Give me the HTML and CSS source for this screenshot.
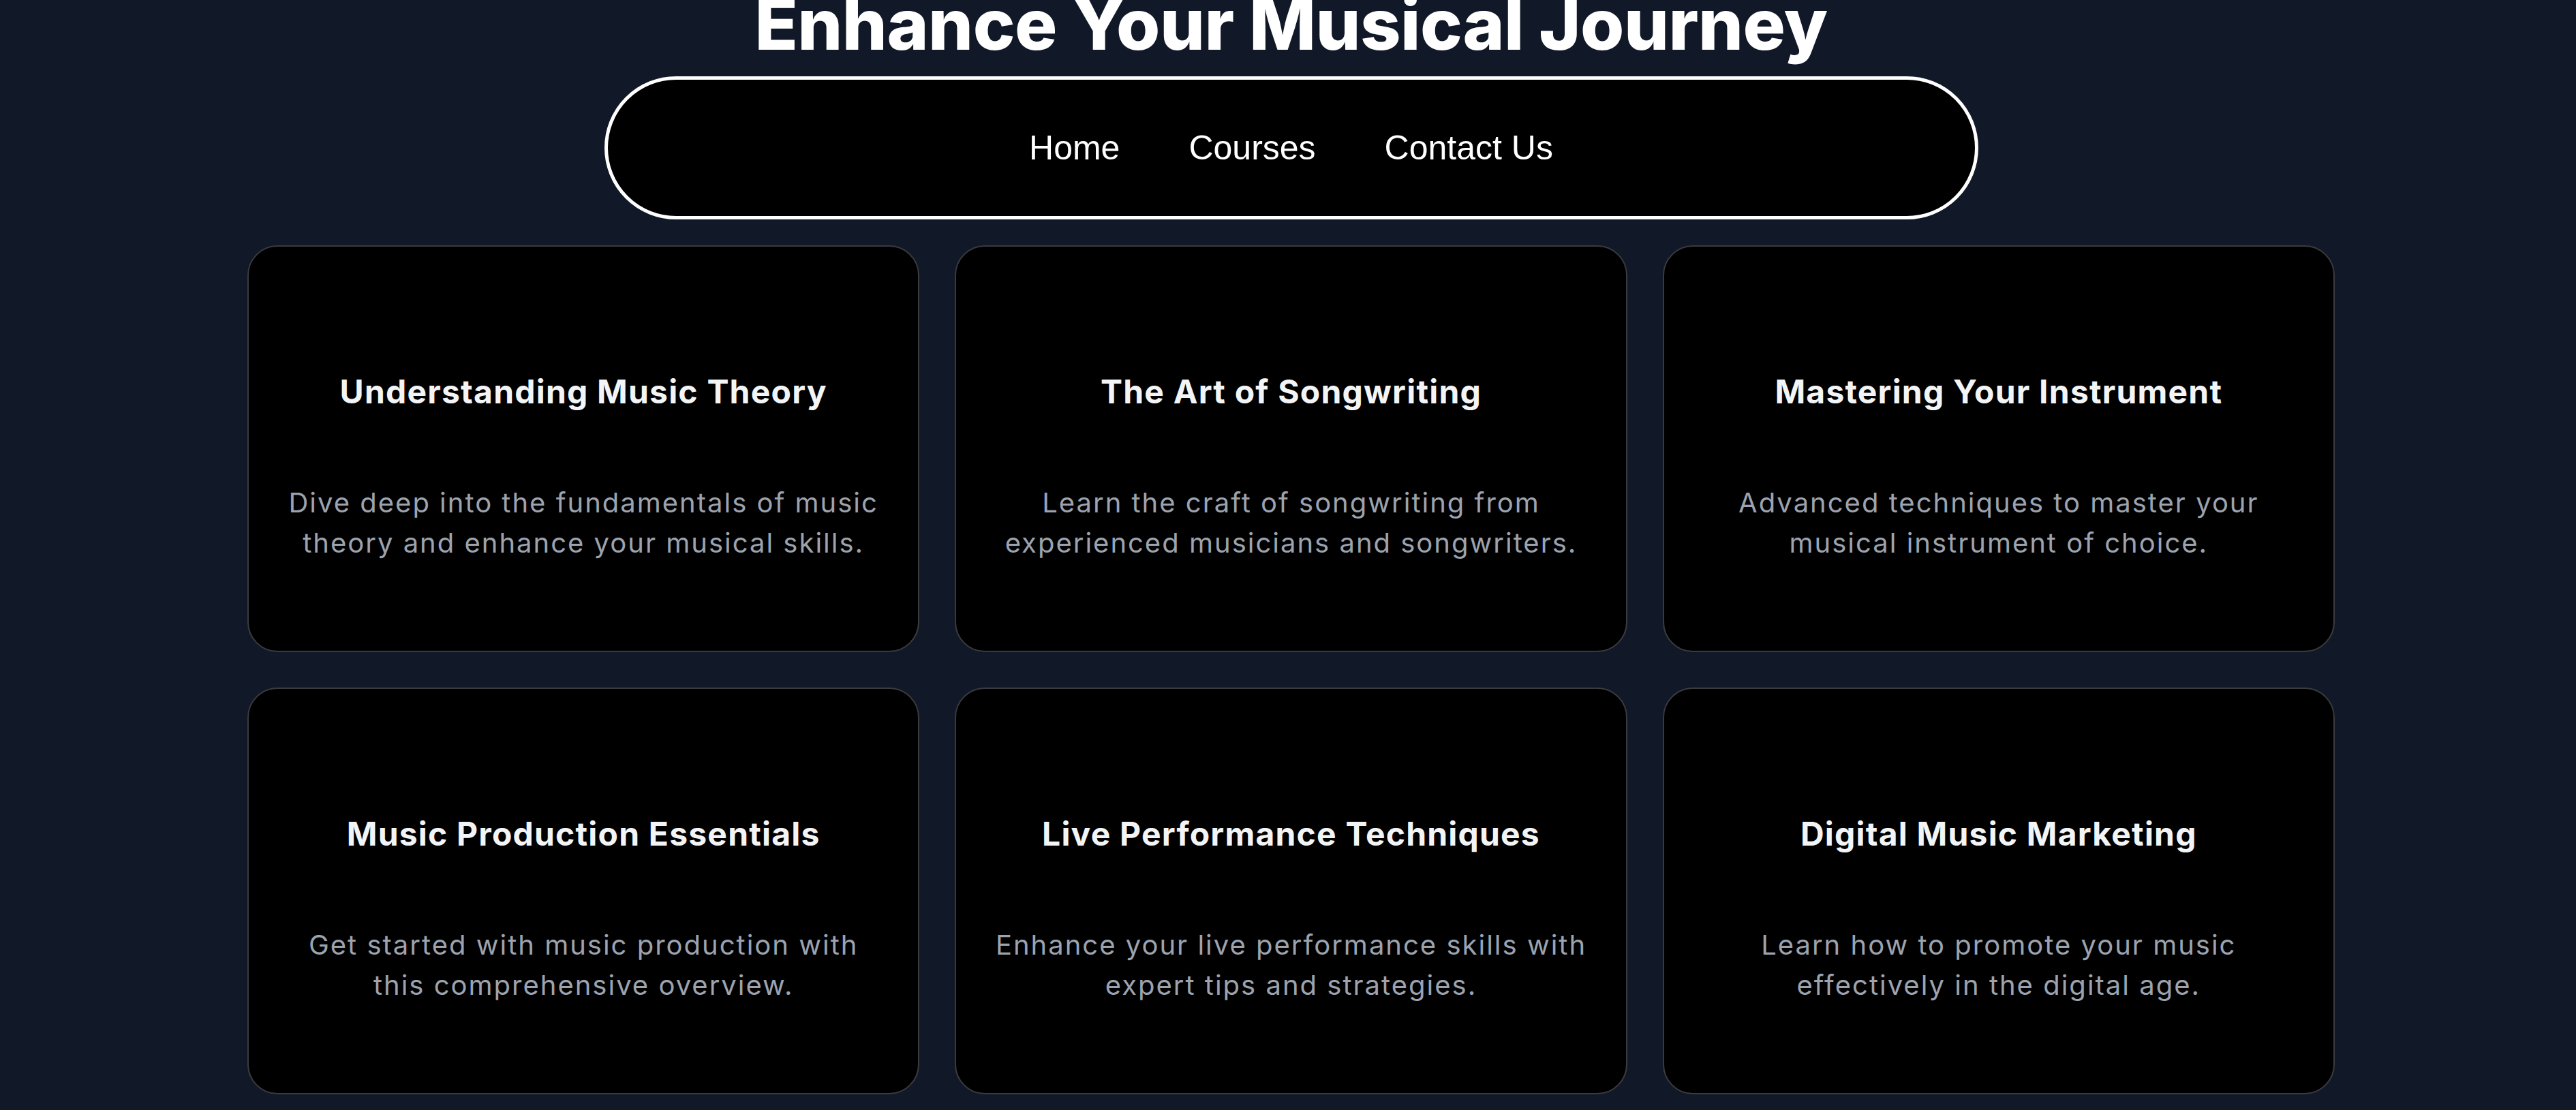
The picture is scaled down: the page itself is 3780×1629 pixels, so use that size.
FILE: index.html
```html
<!DOCTYPE html>
<html lang="en">
<head>
<meta charset="utf-8">
<title>Enhance Your Musical Journey</title>
<link rel="stylesheet" href="styles.css">
</head>
<body>
<main class="page">
  <h1 class="hero-title">Enhance Your Musical Journey</h1>
  <nav class="nav-pill">
    <a class="nav-link" href="#">Home</a>
    <a class="nav-link" href="#">Courses</a>
    <a class="nav-link" href="#">Contact Us</a>
  </nav>
  <section class="course-grid">
    <article class="course-card">
      <h2 class="course-title">Understanding Music Theory</h2>
      <p class="course-desc">Dive deep into the fundamentals of music theory and enhance your musical skills.</p>
    </article>
    <article class="course-card">
      <h2 class="course-title">The Art of Songwriting</h2>
      <p class="course-desc">Learn the craft of songwriting from experienced musicians and songwriters.</p>
    </article>
    <article class="course-card">
      <h2 class="course-title">Mastering Your Instrument</h2>
      <p class="course-desc">Advanced techniques to master your musical instrument of choice.</p>
    </article>
    <article class="course-card">
      <h2 class="course-title">Music Production Essentials</h2>
      <p class="course-desc">Get started with music production with this comprehensive overview.</p>
    </article>
    <article class="course-card">
      <h2 class="course-title">Live Performance Techniques</h2>
      <p class="course-desc">Enhance your live performance skills with expert tips and strategies.</p>
    </article>
    <article class="course-card">
      <h2 class="course-title">Digital Music Marketing</h2>
      <p class="course-desc">Learn how to promote your music effectively in the digital age.</p>
    </article>
  </section>
</main>
</body>
</html>
```
FILE: styles.css
```css
html, body {
  margin: 0;
  padding: 0;
  background: #111827;
  overflow: hidden;
}

.page {
  display: flex;
  flex-direction: column;
  align-items: center;
  padding-left: 9px;
  font-family: Inter, "Noto Sans", sans-serif;
}

.hero-title {
  margin: -17px 0 0;
  font-family: Inter, sans-serif;
  font-size: 104px;
  line-height: 104px;
  font-weight: 800;
  letter-spacing: -0.005em;
  color: #ffffff;
  white-space: nowrap;
}

.nav-pill {
  box-sizing: border-box;
  width: 2016px;
  height: 210px;
  margin-top: 25px;
  border: 5px solid #ffffff;
  border-radius: 9999px;
  background: #000000;
  display: flex;
  align-items: center;
  justify-content: center;
  gap: 101px;
}

.nav-link {
  font-family: "Liberation Sans", Arial, sans-serif;
  font-size: 50px;
  color: #ffffff;
  text-decoration: none;
}

.course-grid {
  width: 3063px;
  margin-top: 38px;
  display: grid;
  grid-template-columns: repeat(3, 1fr);
  column-gap: 52px;
  row-gap: 52px;
}

.course-card {
  box-sizing: border-box;
  background: #000000;
  border: 2px solid #3b3b3f;
  border-radius: 44px;
  padding: 177px 50px 129px;
  text-align: center;
}

.course-title {
  margin: 0;
  font-size: 48px;
  line-height: 72px;
  font-weight: 700;
  letter-spacing: 0.025em;
  color: #f3f4f6;
}

.course-desc {
  margin: 97px 0 0;
  font-size: 40px;
  line-height: 59px;
  font-weight: 400;
  letter-spacing: 0.05em;
  color: #9ca3af;
}
```
